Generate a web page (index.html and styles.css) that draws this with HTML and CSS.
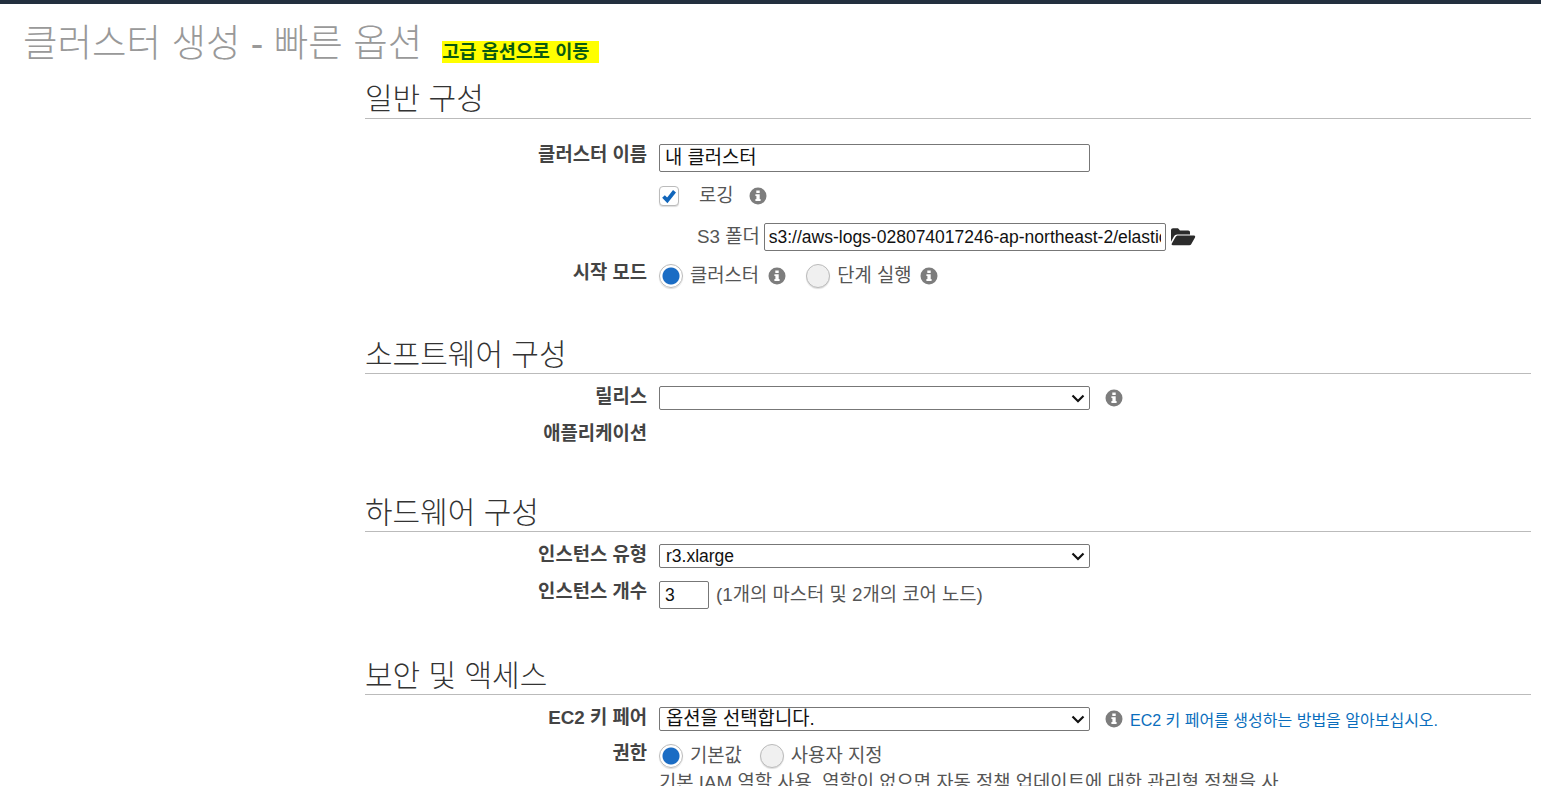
FILE: index.html
```html
<!DOCTYPE html>
<html lang="ko">
<head>
<meta charset="utf-8">
<title>클러스터 생성 - 빠른 옵션</title>
<link rel="stylesheet" href="styles.css">
</head>
<body>
<svg class="sprite" width="0" height="0" aria-hidden="true">
  <symbol id="info" viewBox="0 0 18 18">
    <path fill-rule="evenodd" d="M9 .5a8.500 8.500 0 1 1 0 17a8.500 8.500 0 0 1 0-17zM7.300 3.400v2.500h3.400V3.400zM6.400 7.200v1.700h1v3.200h-1v1.900h5.200v-1.900h-.9V7.200z"/>
  </symbol>
</svg>
<div class="topbar"></div>
<header class="page-head">
  <h1 class="page-title">클러스터 생성 - 빠른 옵션</h1>
  <a class="advanced-link">고급 옵션으로 이동</a>
</header>
<main class="form">
  <section class="group group-general">
    <h2 class="group-title">일반 구성</h2>
    <div class="row row-name">
      <label class="label">클러스터 이름</label>
      <div class="control"><input class="field field-name" type="text" value="내 클러스터"></div>
    </div>
    <div class="row row-logging">
      <span class="label"></span>
      <div class="control">
        <span class="check"><svg viewBox="0 0 20 20" width="20" height="20"><path d="M4.500 10.500l3.800 3.900L15.500 5.300" fill="none" stroke="#1166bb" stroke-width="3.800"/></svg></span>
        <span class="text logging-text">로깅</span>
        <svg class="info info-logging"><use href="#info"/></svg>
      </div>
    </div>
    <div class="row row-s3">
      <span class="label"></span>
      <div class="control">
        <span class="text s3-label">S3 폴더</span>
        <input class="field field-s3" type="text" value="s3://aws-logs-028074017246-ap-northeast-2/elasticmapreduce/">
        <svg class="folder" viewBox="0 0 26 20" width="26" height="20"><path fill="#2b2b2b" d="M1 3.200C1 2 1.800 1.200 3 1.200h5l2 2.400h8.200c1.100 0 1.800.8 1.800 1.800v2H7.200c-1.500 0-2.600.7-3.300 2L1 14.800z"/><path fill="#2b2b2b" d="M7.300 8.600H24c1 0 1.500.8 1 1.800l-3.800 6.800c-.4.7-1 1.100-1.900 1.100H2.800c-1 0-1.500-.8-1-1.700l3.600-6.400c.6-1.100 1.500-1.600 2.700-1.600z"/></svg>
      </div>
    </div>
    <div class="row row-mode">
      <label class="label">시작 모드</label>
      <div class="control">
        <span class="radio radio-on"></span>
        <span class="text mode-a">클러스터</span>
        <svg class="info info-mode-a"><use href="#info"/></svg>
        <span class="radio radio-off"></span>
        <span class="text mode-b">단계 실행</span>
        <svg class="info info-mode-b"><use href="#info"/></svg>
      </div>
    </div>
  </section>

  <section class="group group-software">
    <h2 class="group-title">소프트웨어 구성</h2>
    <div class="row row-release">
      <label class="label">릴리스</label>
      <div class="control">
        <select class="select"><option></option></select>
        <svg class="info info-release"><use href="#info"/></svg>
      </div>
    </div>
    <div class="row row-apps">
      <label class="label">애플리케이션</label>
      <div class="control"></div>
    </div>
  </section>

  <section class="group group-hardware">
    <h2 class="group-title">하드웨어 구성</h2>
    <div class="row row-type">
      <label class="label">인스턴스 유형</label>
      <div class="control">
        <select class="select select-latin"><option>r3.xlarge</option></select>
      </div>
    </div>
    <div class="row row-count">
      <label class="label">인스턴스 개수</label>
      <div class="control">
        <input class="field field-count" type="text" value="3">
        <span class="text count-note">(1개의 마스터 및 2개의 코어 노드)</span>
      </div>
    </div>
  </section>

  <section class="group group-security">
    <h2 class="group-title">보안 및 액세스</h2>
    <div class="row row-key">
      <label class="label">EC2 키 페어</label>
      <div class="control">
        <select class="select"><option>옵션을 선택합니다.</option></select>
        <svg class="info info-release"><use href="#info"/></svg>
        <a class="help-link">EC2 키 페어를 생성하는 방법을 알아보십시오.</a>
      </div>
    </div>
    <div class="row row-perm">
      <label class="label">권한</label>
      <div class="control">
        <span class="radio radio-on"></span>
        <span class="text perm-a">기본값</span>
        <span class="radio radio-off perm-radio"></span>
        <span class="text perm-b">사용자 지정</span>
      </div>
    </div>
    <p class="perm-note">기본 IAM 역할 사용. 역할이 없으면 자동 정책 업데이트에 대한 관리형 정책을 사용하여 생성됩니다.</p>
  </section>
</main>
</body>
</html>
```
FILE: styles.css
```css
* { box-sizing: border-box; }
html, body { margin: 0; height: 786px; overflow: hidden; background: #fff; }
body {
  font-family: "Liberation Sans", "Noto Sans CJK KR", Arial, sans-serif;
  font-size: 18.8px;
  color: #444;
}
.sprite { display: block; height: 0; }
.topbar { height: 4px; background: #232f3e; }

.page-head {
  display: flex;
  align-items: flex-start;
  height: 61px;
  padding: 17px 0 0 23px;
}
.page-title {
  margin: 0;
  font-size: 37.5px;
  line-height: 44px;
  font-weight: 300;
  color: #999;
}
.advanced-link {
  margin: 20px 0 0 20px;
  padding-right: 10px;
  height: 22px;
  line-height: 22px;
  background: #ff0;
  color: #0a5a12;
  font-size: 18.6px;
  font-weight: 700;
}

.form { margin-left: 365px; margin-right: 10px; }
.group-title {
  margin: 0;
  font-size: 30px;
  line-height: 40px;
  font-weight: 300;
  color: #333;
  border-bottom: 1px solid #bbb;
  height: 56px;
  padding-top: 17px;
}
.group-general .group-title { height: 54px; padding-top: 14px; }
.group-software { margin-top: 28px; }
.group-hardware { margin-top: 29px; }
.group-security { margin-top: 30px; }

.row { display: grid; grid-template-columns: 282px 1fr; column-gap: 12px; }
.label {
  text-align: right;
  font-weight: 700;
  font-size: 18.8px;
  line-height: 22px;
  color: #444;
}
.control { display: flex; align-items: center; min-height: 24px; }
.text { font-size: 18.8px; color: #555; line-height: 22px; white-space: nowrap; }

.field {
  display: block;
  border: 1px solid #777;
  border-radius: 2px;
  background: #fff;
  color: #111;
  font: 18.8px "Liberation Sans", "Noto Sans CJK KR", Arial, sans-serif;
  padding: 0 4px;
  margin: 0;
  outline: 0;
}

.row-name { margin-top: 25px; height: 28px; }
.field-name { width: 431px; height: 28px; padding: 0 5px 5px; }
.row-logging { margin-top: 12px; height: 24px; }
.check {
  display: block;
  width: 20px;
  height: 20px;
  border: 1px solid #bbb;
  border-radius: 4px;
  background: #fff;
  box-shadow: 0 1px 1px #ddd;
}
.check svg { display: block; margin: -1px; }
.logging-text { margin-left: 20px; }
.info { width: 18px; height: 18px; fill: #7d7d7d; flex: none; }
.info-logging { margin-left: 15px; }
.row-s3 { margin-top: 15px; height: 28px; }
.s3-label { margin-left: 38px; }
.field-s3 { margin-left: 4px; width: 402px; height: 28px; font-size: 17.5px; }
.folder { margin-left: 4px; flex: none; }
.row-mode { margin-top: 11px; height: 28px; }
.radio {
  display: block;
  flex: none;
  width: 24px;
  height: 24px;
  border-radius: 50%;
  border: 1px solid #bbb;
  background: #f0f0f0;
  box-shadow: 0 1px 1px #ddd;
}
.radio-on { background: radial-gradient(circle, #1a6cc4 0 8px, #fff 9px); }
.mode-a { margin-left: 7px; }
.info-mode-a { margin-left: 9px; }
.radio-off { margin-left: 20px; }
.mode-b { margin-left: 7px; }
.info-mode-b { margin-left: 9px; }

.row-release { margin-top: 12px; height: 24px; }
.select {
  display: block;
  appearance: none;
  width: 431px;
  height: 24px;
  margin: 0;
  padding: 0 24px 2px 6px;
  border: 1px solid #777;
  border-radius: 2px;
  background: #fff url("data:image/svg+xml,%3Csvg xmlns='http://www.w3.org/2000/svg' width='14' height='9'%3E%3Cpath d='M1.500 1.500L7 7l5.500-5.500' fill='none' stroke='%23111' stroke-width='2.200'/%3E%3C/svg%3E") no-repeat right 4px center;
  color: #111;
  font: 18.8px "Liberation Sans", "Noto Sans CJK KR", Arial, sans-serif;
}
.select-latin { font-size: 17.5px; padding-bottom: 0; }
.info-release { margin-left: 15px; }
.row-apps { margin-top: 13px; }

.row-type { margin-top: 12px; height: 24px; }
.row-count { margin-top: 13px; height: 28px; }
.field-count { width: 50px; height: 28px; font-size: 17.5px; padding: 0 5px; }
.count-note { margin-left: 7px; }

.row-key { margin-top: 12px; height: 24px; }
.help-link { margin-left: 7px; font-size: 16px; color: #0a6ebd; white-space: nowrap; }
.row-perm { margin-top: 12px; height: 26px; }
.perm-a { margin-left: 7px; }
.perm-radio { margin-left: 18px; }
.perm-b { margin-left: 7px; }
.perm-note {
  margin: 3px 0 0 294px;
  width: 625px;
  font-size: 18.8px;
  line-height: 22px;
  color: #555;
}
```
